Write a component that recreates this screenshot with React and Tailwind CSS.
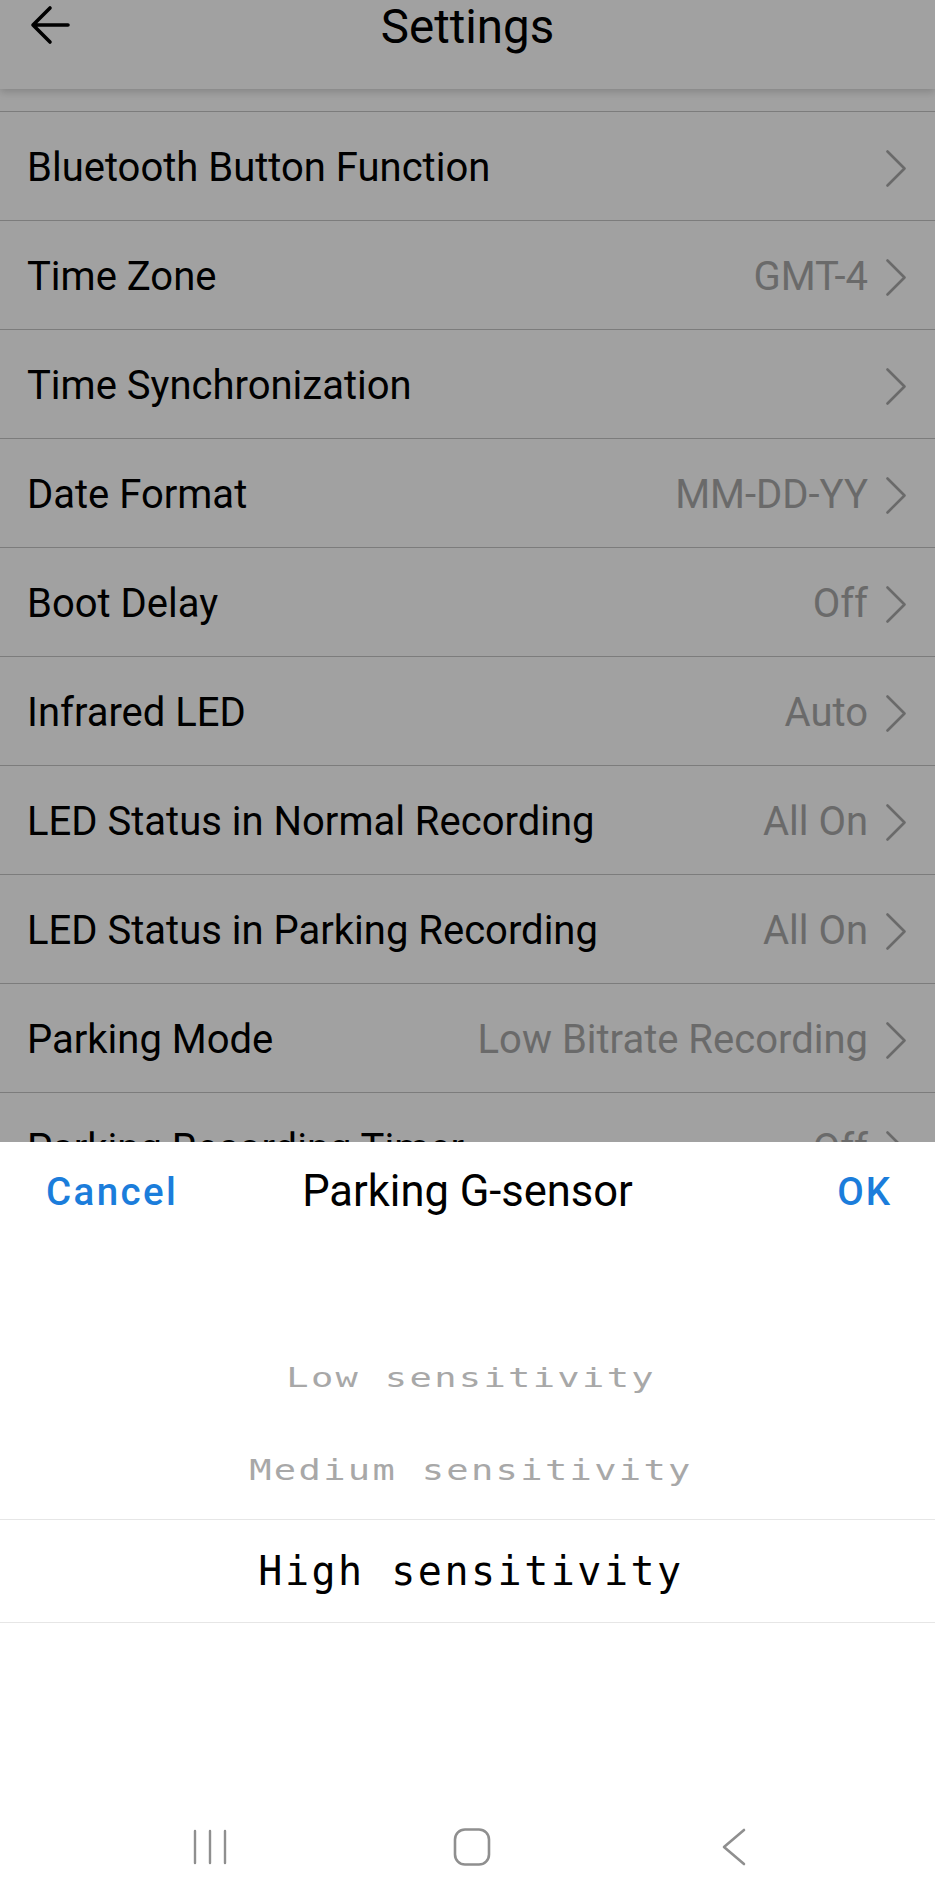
import React from 'react'

const ROWS = [
  ['Bluetooth Button Function', ''],
  ['Time Zone', 'GMT-4'],
  ['Time Synchronization', ''],
  ['Date Format', 'MM-DD-YY'],
  ['Boot Delay', 'Off'],
  ['Infrared LED', 'Auto'],
  ['LED Status in Normal Recording', 'All On'],
  ['LED Status in Parking Recording', 'All On'],
  ['Parking Mode', 'Low Bitrate Recording'],
  ['Parking Recording Timer', 'Off'],
]

function Chevron() {
  return (
    <svg width="20" height="37" viewBox="0 0 20 37" className="shrink-0">
      <polyline
        points="1.5,1.5 18.5,18.5 1.5,35.5"
        fill="none"
        stroke="#a9a9a9"
        strokeWidth="2.6"
        strokeLinecap="round"
        strokeLinejoin="round"
      />
    </svg>
  )
}

function Row({ label, value }) {
  return (
    <div className="h-[109px] border-t border-[#c4c4c4] flex items-center pt-[4px] pl-[27px] pr-[29px]">
      <span className="flex-1 text-[40px] text-black whitespace-nowrap">{label}</span>
      {value && <span className="text-[40px] text-[#a9a9a9] whitespace-nowrap">{value}</span>}
      <span className="ml-[18px] flex">
        <Chevron />
      </span>
    </div>
  )
}

export default function App() {
  return (
    <div className="relative w-[935px] h-[1900px] overflow-hidden bg-white font-['Roboto',sans-serif]">
      {/* settings page */}
      <div className="relative z-10 h-[89px] bg-white grid grid-cols-[1fr_auto_1fr] shadow-[0_3px_8px_rgba(0,0,0,0.18)]">
        <div className="pl-[30px] pt-[5px]">
          <svg width="40" height="40" viewBox="0 0 40 40">
            <path
              d="M38 20H3M20 3L3 20L20 37"
              fill="none"
              stroke="#000"
              strokeWidth="3.6"
              strokeLinecap="round"
              strokeLinejoin="round"
            />
          </svg>
        </div>
        <h1 className="text-[47.5px] leading-[54px] text-black font-normal">Settings</h1>
        <div />
      </div>
      <div className="h-[22px]" />
      {ROWS.map(([l, v]) => (
        <Row key={l} label={l} value={v} />
      ))}

      {/* dim overlay */}
      <div className="absolute inset-0 z-20 bg-[rgba(0,0,0,0.37)]" />

      {/* bottom sheet picker */}
      <div className="absolute left-0 right-0 bottom-0 z-30 h-[758px] bg-white flex flex-col">
        <div className="h-[100px] grid grid-cols-[1fr_auto_1fr] items-center">
          <button className="justify-self-start pl-[46px] text-[38.5px] font-medium tracking-[2.4px] text-[#1b7ddb]">
            Cancel
          </button>
          <span className="text-[43.5px] text-black">Parking G-sensor</span>
          <button className="justify-self-end pr-[43px] text-[38.5px] font-medium tracking-[2px] text-[#1b7ddb]">
            OK
          </button>
        </div>

        <div className="font-['DejaVu_Sans_Mono',monospace] text-[40px] tracking-[2.5px] whitespace-nowrap">
          <div className="h-[90px]" />
          <div className="h-[92px] flex items-center justify-center">
            <span className="pl-[7px] text-[#a8a8a8] scale-x-[0.927] scale-y-[0.66]">Low sensitivity</span>
          </div>
          <div className="h-[92px] flex items-center justify-center">
            <span className="pl-[7px] text-[#a8a8a8] scale-x-[0.927] scale-y-[0.73]">Medium sensitivity</span>
          </div>
          <div className="h-[3px]" />
          <div className="h-[104px] border-y border-[#e6e6e6] flex items-center justify-center">
            <span className="pl-[7px] text-black">High sensitivity</span>
          </div>
        </div>

        <div className="mt-auto h-[106px] flex items-center justify-center pl-[8px]">
          <div className="w-[262px] flex justify-center">
            <svg width="34" height="36" viewBox="0 0 34 36">
              <path d="M2 2V34M17 2V34M32 2V34" stroke="#8f8f8f" strokeWidth="2.4" strokeLinecap="round" />
            </svg>
          </div>
          <div className="w-[262px] flex justify-center">
            <svg width="38" height="38" viewBox="0 0 38 38">
              <rect x="2" y="1.5" width="34" height="35" rx="10" fill="none" stroke="#8f8f8f" strokeWidth="2.6" />
            </svg>
          </div>
          <div className="w-[262px] flex justify-center">
            <svg width="26" height="38" viewBox="0 0 26 38">
              <polyline points="23,2 3,19 23,36" fill="none" stroke="#8f8f8f" strokeWidth="2.6" strokeLinecap="round" strokeLinejoin="round" />
            </svg>
          </div>
        </div>
      </div>
    </div>
  )
}
